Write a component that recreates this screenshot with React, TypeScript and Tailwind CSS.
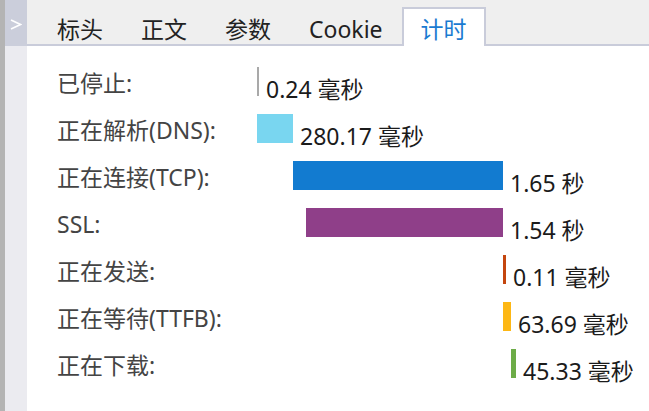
import React from "react";

type Row = { label: string; left: number; width: number; color: string; value: string };

const rows: Row[] = [
  { label: "已停止:", left: 0, width: 2, color: "#a9a9a9", value: "0.24 毫秒" },
  { label: "正在解析(DNS):", left: 0, width: 36, color: "#79d6f0", value: "280.17 毫秒" },
  { label: "正在连接(TCP):", left: 36, width: 210, color: "#127bd0", value: "1.65 秒" },
  { label: "SSL:", left: 49, width: 197, color: "#8f3f89", value: "1.54 秒" },
  { label: "正在发送:", left: 246, width: 3, color: "#c4460e", value: "0.11 毫秒" },
  { label: "正在等待(TTFB):", left: 246, width: 8, color: "#fdb714", value: "63.69 毫秒" },
  { label: "正在下载:", left: 254, width: 5, color: "#6dac48", value: "45.33 毫秒" },
];

const tabs = ["标头", "正文", "参数", "Cookie"];

export default function App() {
  return (
    <div className="flex h-[411px] w-[649px] overflow-hidden bg-white font-['Noto_Sans','Noto_Sans_CJK_SC',sans-serif] text-[23px]">
      <div className="w-[5px] shrink-0 bg-[#b4b4b4]" />
      <div className="flex w-[22px] shrink-0 flex-col bg-[#ebebf0]">
        <div className="flex h-[46px] justify-center bg-[#cbcedb] pt-[19px]">
          <svg width="12" height="11" viewBox="0 0 12 11" fill="none">
            <path d="M1 1 L10.5 5.5 L1 10" stroke="white" strokeWidth="1.6" strokeLinejoin="miter" />
          </svg>
        </div>
      </div>
      <div className="flex flex-1 flex-col">
        <div className="flex h-[46px] items-end border-b-2 border-[#c9ccda] bg-[#efefef] pl-[11px]">
          {tabs.map((t) => (
            <div key={t} className="flex h-[37px] items-start px-[19px] pt-[7px] leading-[30px] text-[#222]">
              {t}
            </div>
          ))}
          <div className="-mb-[2px] flex h-[39px] items-start border-2 border-b-0 border-[#c9ccda] bg-white px-[17px] pt-[5px] leading-[30px] text-[#1a7bd1]">
            计时
          </div>
        </div>
        <div className="flex flex-col pt-[21px]">
          {rows.map((r) => (
            <div key={r.label} className="flex h-[47px] items-start">
              <div className="flex h-[29px] w-[230px] shrink-0 items-center pl-[30px] pt-[3px] leading-none text-[#444]">
                {r.label}
              </div>
              <div className="flex items-start">
                <div style={{ marginLeft: r.left, width: r.width, backgroundColor: r.color }} className="h-[29px] shrink-0" />
                <div className="ml-[7px] mt-[7px] whitespace-nowrap leading-[30px] text-[#1b1b1b]">{r.value}</div>
              </div>
            </div>
          ))}
        </div>
      </div>
    </div>
  );
}
